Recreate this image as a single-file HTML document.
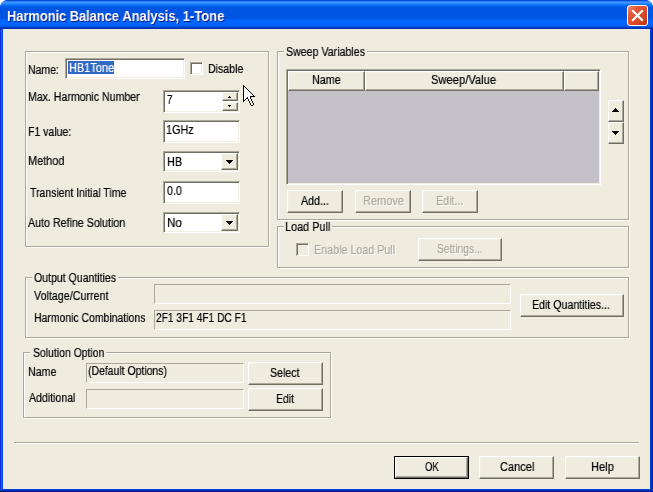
<!DOCTYPE html>
<html><head><meta charset="utf-8">
<style>
*{box-sizing:border-box;margin:0;padding:0}
html,body{width:653px;height:492px;overflow:hidden;background:#fff}
body{font-family:"Liberation Sans",sans-serif;font-size:12.5px;color:#000;position:relative}
.a{position:absolute}
#win{position:absolute;left:0;top:0;width:653px;height:492px;background:#fff;overflow:hidden}
#frame{position:absolute;left:0;top:0;width:653px;height:492px;border-radius:8px 8px 0 0;
 background:linear-gradient(to right,#0831D9 0,#0831D9 1px,#166AEE 1px,#166AEE 2px,#0046DC 2px,#0046DC 651px,#0033C4 651px,#0033C4 652px,#001EA0 652px)}
#frame:after{content:"";position:absolute;left:0;top:489px;width:653px;height:3px;background:linear-gradient(to bottom,#0040D0 0,#0040D0 1px,#0029B5 1px,#0029B5 2px,#001A96 2px)}
#title{position:absolute;left:0;top:0;width:653px;height:29px;background:linear-gradient(to bottom,#0A48D8 0.5px,#2A80F8 1.5px,#3C96FF 2.5px,#2888FF 3.5px,#1278F8 4.5px,#066CF2 5.5px,#0260EA 6.5px,#0058E6 7.5px,#0055E3 8.5px,#0055E3 9.5px,#0055E3 10.5px,#0055E3 11.5px,#0055E3 12.5px,#0055E3 13.5px,#0055E3 14.5px,#0055E3 15.5px,#0055E3 16.5px,#0055E3 17.5px,#0058E8 18.5px,#005EF2 19.5px,#0064FA 20.5px,#0066FF 21.5px,#0066FF 22.5px,#0066FF 23.5px,#0066FF 24.5px,#0062F8 25.5px,#0056E6 26.5px,#0040C8 27.5px,#0030B0 28.5px);border-radius:8px 8px 0 0}
#title .t{will-change:transform;position:absolute;left:6.5px;top:8px;font-weight:bold;font-size:14px;color:#fff;text-shadow:1px 1px 0 #0A1883;white-space:nowrap;line-height:16px;transform:scaleX(0.925);transform-origin:0 0}
#close{position:absolute;left:627px;top:5px;width:21px;height:21px;border:1px solid #fff;border-radius:3px;
 background:linear-gradient(135deg,#F0957E 0%,#E4593A 25%,#DE4A26 60%,#BE330F 100%)}
#body{position:absolute;left:3px;top:29px;width:647px;height:460px;background:#EFEBDF}
.gb{position:absolute;border:1px solid #ACA899;box-shadow:1px 1px 0 #fff, inset 1px 1px 0 #fff}
.gp{position:absolute;background:#EFEBDF}
.in{position:absolute;background:#fff;border:1px solid;border-color:#ACA899 #fff #fff #ACA899;box-shadow:inset 1px 1px 0 #716F64, inset -1px -1px 0 #F1EFE2}
.ro{position:absolute;background:#EFEBDF;border:1px solid;border-color:#ACA899 #fff #fff #ACA899}
.btn{position:absolute;background:#EFEBDF;border:1px solid;border-color:#fff #716F64 #716F64 #fff;box-shadow:inset -1px -1px 0 #ACA899, inset 1px 1px 0 #F1EFE2}
.cb{position:absolute;width:13px;height:13px;background:#fff;border:1px solid;border-color:#ACA899 #fff #fff #ACA899;box-shadow:inset 1px 1px 0 #716F64, inset -1px -1px 0 #F1EFE2}
.tri{position:absolute}
.tx{-webkit-text-stroke:0.2px;will-change:transform;position:absolute;white-space:nowrap;line-height:14px;height:14px;transform-origin:0 0}
.tx.d{color:#ACA899;text-shadow:1px 1px 0 #fff}
.tx.w{color:#fff}
</style></head><body>
<div id="win">
 <div id="frame"></div>
 <div id="title"><div class="t"><span style="letter-spacing:-0.08px">Harmonic Balance </span>Analysis, 1-Tone</div>
  <div id="close"><svg width="19" height="19" viewBox="0 0 19 19" style="position:absolute;left:0;top:0"><path d="M5 5 L14 14 M14 5 L5 14" stroke="#fff" stroke-width="2.2" stroke-linecap="square"/></svg></div>
 </div>
 <div id="body"></div>

 <!-- group boxes -->
 <div class="gb" style="left:25px;top:51px;width:244px;height:196px"></div>
 <div class="gb" style="left:277px;top:51px;width:352px;height:169px"></div>
 <div class="gb" style="left:277px;top:226px;width:352px;height:42px"></div>
 <div class="gb" style="left:25px;top:277px;width:604px;height:61px"></div>
 <div class="gb" style="left:23px;top:352px;width:308px;height:66px"></div>

 <!-- left group controls -->
 <div class="in" style="left:65px;top:58px;width:120px;height:21px"><div class="a" style="left:2px;top:2px;width:46px;height:13px;background:#316AC5"></div></div>
 <div class="cb" style="left:190px;top:62px"></div>

 <div class="in" style="left:163px;top:90px;width:77px;height:23px">
   <div class="btn" style="left:58px;top:1px;width:16px;height:9px"><svg class="tri" style="left:5px;top:3px" width="3" height="2" viewBox="0 0 3 2" shape-rendering="crispEdges"><path d="M1 0h1v1h1v1h-3v-1h1z" fill="#000"/></svg></div>
   <div class="btn" style="left:58px;top:11px;width:16px;height:9px"><svg class="tri" style="left:5px;top:2px" width="3" height="2" viewBox="0 0 3 2" shape-rendering="crispEdges"><path d="M0 0h3v1h-1v1h-1v-1h-1z" fill="#000"/></svg></div>
 </div>
 <div class="in" style="left:163px;top:120px;width:77px;height:23px"></div>
 <div class="in" style="left:163px;top:151px;width:77px;height:21px">
   <div class="btn" style="left:57px;top:1px;width:17px;height:17px"><svg class="tri" style="left:4px;top:6px" width="7" height="4" viewBox="0 0 7 4" shape-rendering="crispEdges"><path d="M0 0h7v1h-1v1h-1v1h-1v1h-1v-1h-1v-1h-1v-1h-1z" fill="#000"/></svg></div>
 </div>
 <div class="in" style="left:163px;top:181px;width:77px;height:23px"></div>
 <div class="in" style="left:163px;top:212px;width:77px;height:21px">
   <div class="btn" style="left:57px;top:1px;width:17px;height:17px"><svg class="tri" style="left:4px;top:6px" width="7" height="4" viewBox="0 0 7 4" shape-rendering="crispEdges"><path d="M0 0h7v1h-1v1h-1v1h-1v1h-1v-1h-1v-1h-1v-1h-1z" fill="#000"/></svg></div>
 </div>

 <!-- sweep variables -->
 <div class="a" style="left:286px;top:69px;width:315px;height:116px;background:#C4C2C8;border:1px solid;border-color:#ACA899 #fff #fff #ACA899;box-shadow:inset 1px 1px 0 #716F64, inset -1px -1px 0 #F1EFE2"></div>
 <div class="btn" style="left:288px;top:71px;width:77px;height:20px"></div>
 <div class="btn" style="left:365px;top:71px;width:199px;height:20px"></div>
 <div class="btn" style="left:564px;top:71px;width:35px;height:20px"></div>
 <div class="btn" style="left:608px;top:100px;width:16px;height:22px"><svg class="tri" style="left:3px;top:7px" width="7" height="4" viewBox="0 0 7 4" shape-rendering="crispEdges"><path d="M3 0h1v1h1v1h1v1h1v1h-7v-1h1v-1h1v-1h1z" fill="#000"/></svg></div>
 <div class="btn" style="left:608px;top:122px;width:16px;height:22px"><svg class="tri" style="left:3px;top:8px" width="7" height="4" viewBox="0 0 7 4" shape-rendering="crispEdges"><path d="M0 0h7v1h-1v1h-1v1h-1v1h-1v-1h-1v-1h-1v-1h-1z" fill="#000"/></svg></div>
 <div class="btn" style="left:287px;top:190px;width:56px;height:23px"></div>
 <div class="btn" style="left:355px;top:190px;width:56px;height:23px"></div>
 <div class="btn" style="left:422px;top:190px;width:56px;height:23px"></div>

 <!-- load pull -->
 <div class="cb" style="left:296px;top:243px;background:#EFEBDF"></div>
 <div class="btn" style="left:418px;top:238px;width:84px;height:23px"></div>

 <!-- output quantities -->
 <div class="ro" style="left:154px;top:284px;width:357px;height:20px"></div>
 <div class="ro" style="left:154px;top:310px;width:357px;height:20px"></div>
 <div class="btn" style="left:520px;top:294px;width:104px;height:23px"></div>

 <!-- solution option -->
 <div class="ro" style="left:86px;top:363px;width:158px;height:20px"></div>
 <div class="ro" style="left:86px;top:389px;width:158px;height:20px"></div>
 <div class="btn" style="left:248px;top:362px;width:75px;height:23px"></div>
 <div class="btn" style="left:248px;top:388px;width:75px;height:23px"></div>

 <!-- separator -->
 <div class="a" style="left:14px;top:442px;width:625px;height:2px;border-top:1px solid #ACA899;border-bottom:1px solid #fff"></div>

 <div class="a" style="left:394px;top:456px;width:75px;height:23px;background:#000"></div>
 <div class="btn" style="left:395px;top:457px;width:73px;height:21px"></div>
 <div class="btn" style="left:479px;top:456px;width:75px;height:23px"></div>
 <div class="btn" style="left:565px;top:456px;width:75px;height:23px"></div>

<div class="tx" style="left:27.96px;top:62.67px;transform:scaleX(0.8375)">Name:</div>
<div class="tx w" style="left:68.52px;top:60.67px;transform:scaleX(0.8777)">HB1Tone</div>
<div class="tx" style="left:207.95px;top:61.67px;transform:scaleX(0.8469)">Disable</div>
<div class="tx" style="left:27.85px;top:89.67px;transform:scaleX(0.8462)">Max. Harmonic Number</div>
<div class="tx" style="left:166.80px;top:92.67px;transform:scaleX(0.7857)">7</div>
<div class="tx" style="left:27.86px;top:124.67px;transform:scaleX(0.8410)">F1 value:</div>
<div class="tx" style="left:166.20px;top:122.67px;transform:scaleX(0.8643)">1GHz</div>
<div class="tx" style="left:27.83px;top:153.67px;transform:scaleX(0.8738)">Method</div>
<div class="tx" style="left:166.73px;top:154.67px;transform:scaleX(0.8735)">HB</div>
<div class="tx" style="left:30.00px;top:185.67px;transform:scaleX(0.8382)">Transient Initial Time</div>
<div class="tx" style="left:166.80px;top:183.67px;transform:scaleX(0.8494)">0.0</div>
<div class="tx" style="left:27.90px;top:215.67px;transform:scaleX(0.8534)">Auto Refine Solution</div>
<div class="tx" style="left:166.67px;top:215.67px;transform:scaleX(0.9317)">No</div>
<div class="gp" style="left:284px;top:46px;width:83px;height:12px"></div>
<div class="tx g" style="left:286.30px;top:44.67px;transform:scaleX(0.8496)">Sweep Variables</div>
<div class="tx" style="left:311.54px;top:72.67px;transform:scaleX(0.8582)">Name</div>
<div class="tx" style="left:431.20px;top:72.67px;transform:scaleX(0.8958)">Sweep/Value</div>
<div class="tx" style="left:301.00px;top:193.67px;transform:scaleX(0.8544)">Add...</div>
<div class="tx d" style="left:362.52px;top:193.67px;transform:scaleX(0.8817)">Remove</div>
<div class="tx d" style="left:435.54px;top:193.67px;transform:scaleX(0.8594)">Edit...</div>
<div class="gp" style="left:284px;top:221px;width:48px;height:12px"></div>
<div class="tx g" style="left:285.43px;top:219.67px;transform:scaleX(0.8700)">Load Pull</div>
<div class="tx d" style="left:313.94px;top:242.67px;transform:scaleX(0.8583)">Enable Load Pull</div>
<div class="tx d" style="left:436.80px;top:241.67px;transform:scaleX(0.8202)">Settings...</div>
<div class="gp" style="left:32px;top:272px;width:86px;height:12px"></div>
<div class="tx g" style="left:34.20px;top:270.67px;transform:scaleX(0.8431)">Output Quantities</div>
<div class="tx" style="left:34.20px;top:288.67px;transform:scaleX(0.8571)">Voltage/Current</div>
<div class="tx" style="left:34.07px;top:310.67px;transform:scaleX(0.8347)">Harmonic Combinations</div>
<div class="tx" style="left:156.00px;top:310.67px;transform:scaleX(0.8139)">2F1 3F1 4F1 DC F1</div>
<div class="tx" style="left:532.35px;top:297.67px;transform:scaleX(0.8489)">Edit Quantities...</div>
<div class="gp" style="left:30px;top:347px;width:76px;height:12px"></div>
<div class="tx g" style="left:32.80px;top:345.67px;transform:scaleX(0.8349)">Solution Option</div>
<div class="tx" style="left:27.95px;top:364.67px;transform:scaleX(0.8521)">Name</div>
<div class="tx" style="left:87.70px;top:363.67px;transform:scaleX(0.8355)">(Default Options)</div>
<div class="tx" style="left:28.60px;top:390.67px;transform:scaleX(0.8444)">Additional</div>
<div class="tx" style="left:270.40px;top:365.67px;transform:scaleX(0.8506)">Select</div>
<div class="tx" style="left:275.96px;top:391.67px;transform:scaleX(0.8355)">Edit</div>
<div class="tx" style="left:424.80px;top:459.67px;transform:scaleX(0.7638)">OK</div>
<div class="tx" style="left:500.30px;top:459.67px;transform:scaleX(0.8811)">Cancel</div>
<div class="tx" style="left:590.51px;top:459.67px;transform:scaleX(0.8927)">Help</div>
<svg class="a" style="left:243px;top:85px" width="12" height="21" viewBox="0 0 12 21" shape-rendering="crispEdges"><rect x="0" y="0" width="1" height="1" fill="#000"/><rect x="0" y="1" width="2" height="1" fill="#000"/><rect x="0" y="2" width="1" height="1" fill="#000"/><rect x="1" y="2" width="1" height="1" fill="#fff"/><rect x="2" y="2" width="1" height="1" fill="#000"/><rect x="0" y="3" width="1" height="1" fill="#000"/><rect x="1" y="3" width="2" height="1" fill="#fff"/><rect x="3" y="3" width="1" height="1" fill="#000"/><rect x="0" y="4" width="1" height="1" fill="#000"/><rect x="1" y="4" width="3" height="1" fill="#fff"/><rect x="4" y="4" width="1" height="1" fill="#000"/><rect x="0" y="5" width="1" height="1" fill="#000"/><rect x="1" y="5" width="4" height="1" fill="#fff"/><rect x="5" y="5" width="1" height="1" fill="#000"/><rect x="0" y="6" width="1" height="1" fill="#000"/><rect x="1" y="6" width="5" height="1" fill="#fff"/><rect x="6" y="6" width="1" height="1" fill="#000"/><rect x="0" y="7" width="1" height="1" fill="#000"/><rect x="1" y="7" width="6" height="1" fill="#fff"/><rect x="7" y="7" width="1" height="1" fill="#000"/><rect x="0" y="8" width="1" height="1" fill="#000"/><rect x="1" y="8" width="7" height="1" fill="#fff"/><rect x="8" y="8" width="1" height="1" fill="#000"/><rect x="0" y="9" width="1" height="1" fill="#000"/><rect x="1" y="9" width="8" height="1" fill="#fff"/><rect x="9" y="9" width="1" height="1" fill="#000"/><rect x="0" y="10" width="1" height="1" fill="#000"/><rect x="1" y="10" width="9" height="1" fill="#fff"/><rect x="10" y="10" width="1" height="1" fill="#000"/><rect x="0" y="11" width="1" height="1" fill="#000"/><rect x="1" y="11" width="6" height="1" fill="#fff"/><rect x="7" y="11" width="5" height="1" fill="#000"/><rect x="0" y="12" width="1" height="1" fill="#000"/><rect x="1" y="12" width="3" height="1" fill="#fff"/><rect x="4" y="12" width="1" height="1" fill="#000"/><rect x="5" y="12" width="2" height="1" fill="#fff"/><rect x="7" y="12" width="1" height="1" fill="#000"/><rect x="0" y="13" width="1" height="1" fill="#000"/><rect x="1" y="13" width="2" height="1" fill="#fff"/><rect x="3" y="13" width="2" height="1" fill="#000"/><rect x="5" y="13" width="2" height="1" fill="#fff"/><rect x="7" y="13" width="1" height="1" fill="#000"/><rect x="0" y="14" width="1" height="1" fill="#000"/><rect x="1" y="14" width="1" height="1" fill="#fff"/><rect x="2" y="14" width="1" height="1" fill="#000"/><rect x="5" y="14" width="1" height="1" fill="#000"/><rect x="6" y="14" width="2" height="1" fill="#fff"/><rect x="8" y="14" width="1" height="1" fill="#000"/><rect x="0" y="15" width="2" height="1" fill="#000"/><rect x="5" y="15" width="1" height="1" fill="#000"/><rect x="6" y="15" width="2" height="1" fill="#fff"/><rect x="8" y="15" width="1" height="1" fill="#000"/><rect x="0" y="16" width="1" height="1" fill="#000"/><rect x="6" y="16" width="1" height="1" fill="#000"/><rect x="7" y="16" width="2" height="1" fill="#fff"/><rect x="9" y="16" width="1" height="1" fill="#000"/><rect x="6" y="17" width="1" height="1" fill="#000"/><rect x="7" y="17" width="2" height="1" fill="#fff"/><rect x="9" y="17" width="1" height="1" fill="#000"/><rect x="7" y="18" width="1" height="1" fill="#000"/><rect x="8" y="18" width="2" height="1" fill="#fff"/><rect x="10" y="18" width="1" height="1" fill="#000"/><rect x="7" y="19" width="1" height="1" fill="#000"/><rect x="8" y="19" width="2" height="1" fill="#fff"/><rect x="10" y="19" width="1" height="1" fill="#000"/><rect x="8" y="20" width="2" height="1" fill="#000"/></svg>
</div>
</body></html>
